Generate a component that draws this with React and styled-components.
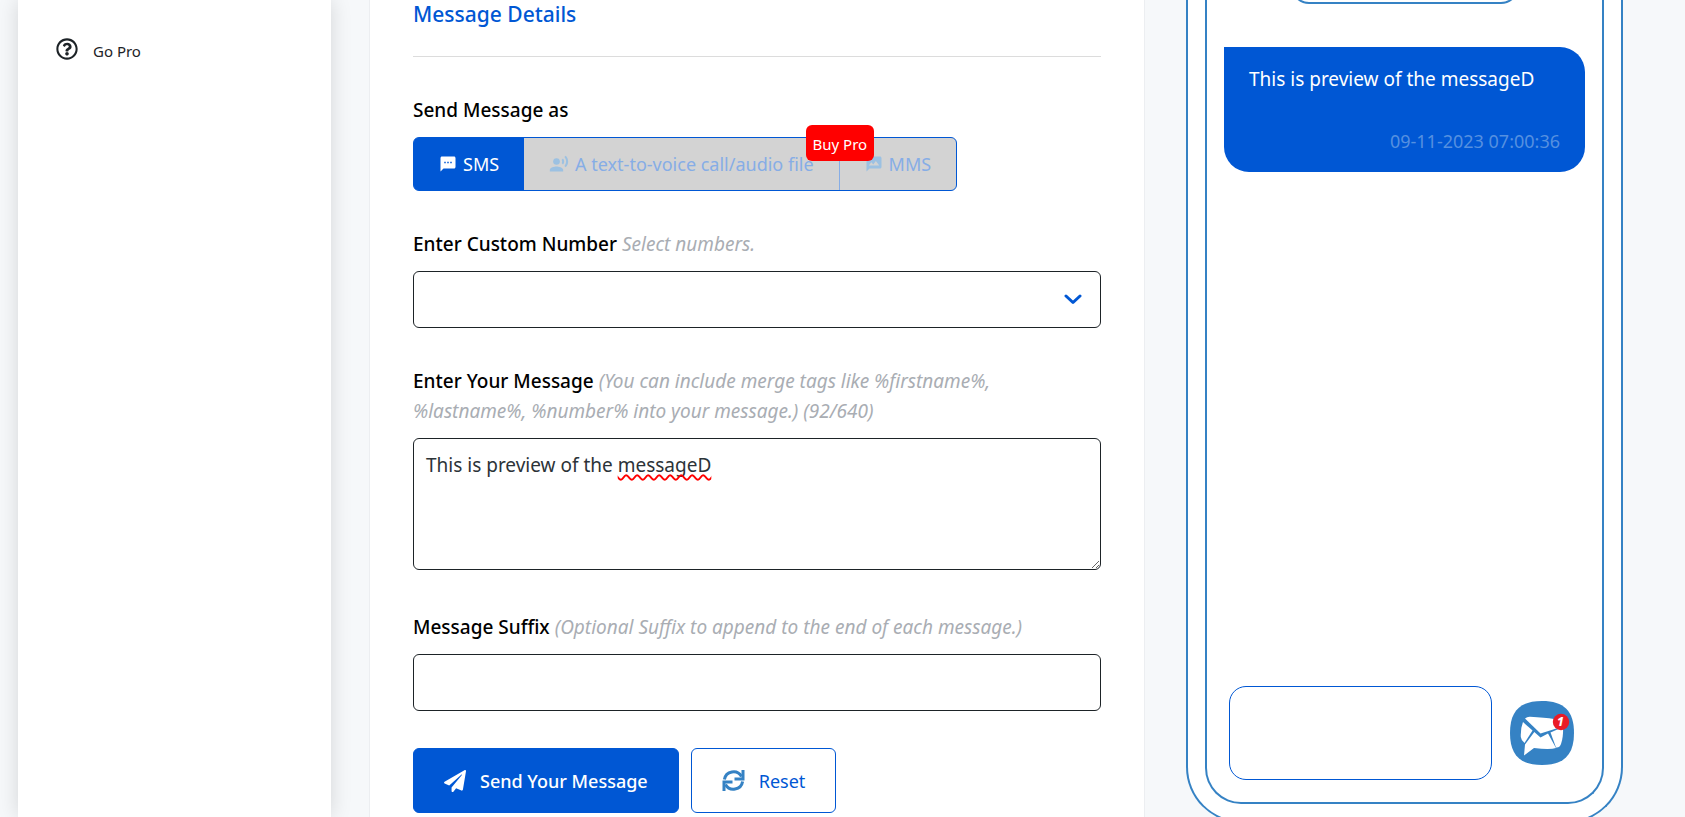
import React, { useState } from "react";
import styled, { createGlobalStyle, css } from "styled-components";
import { MdSms, MdRecordVoiceOver, MdMms } from "react-icons/md";
import { FaPaperPlane, FaRegQuestionCircle } from "react-icons/fa";

const blue = "#0057d4";
const steel = "#3582c4";
const ink = "#1d2327";

const GlobalStyle = createGlobalStyle`
  *, *::before, *::after { box-sizing: border-box; }
  body {
    margin: 0;
    background: #f6f8fa;
    color: ${ink};
    font-family: "Noto Sans", "Open Sans", sans-serif;
    font-size: 19px;
    line-height: 30px;
  }
  button, input, select, textarea { font: inherit; }
`;

const Page = styled.div`
  display: flex;
  height: 100vh;
  overflow: hidden;
  padding: 0 62px 0 18px;
`;

const Sidebar = styled.nav`
  flex: 0 0 313px;
  margin-right: 38px;
  padding: 32px 38px;
  background: #fff;
  box-shadow: 0 0 20px rgba(0, 0, 0, 0.14);
`;

const SidebarLink = styled.a`
  display: flex;
  align-items: center;
  gap: 15px;
  color: ${ink};
  font-size: 15px;
  text-decoration: none;

  span { padding-top: 4px; }
`;

const Card = styled.main`
  flex: 1;
  min-width: 0;
  margin-right: 41px;
  padding: 0 43px;
  background: #fff;
  border: solid #eceef1;
  border-width: 0 1px;
`;

const Title = styled.h2`
  margin: 0;
  padding-bottom: 28px;
  border-bottom: 1px solid #dcdcdc;
  color: ${blue};
  font-size: 21px;
  font-weight: 500;
  line-height: 28px;
`;

const Field = styled.div`
  margin-top: 38px;
`;

const Caption = styled.label`
  display: block;
  margin-bottom: 12px;
  color: #000;
  font-weight: 500;
`;

const Hint = styled.em`
  color: #a9adb3;
  font-weight: 400;
`;

const TypeGroup = styled.div`
  position: relative;
  display: inline-flex;
  height: 54px;
  border: 1px solid ${blue};
  border-radius: 6px;
  background: #d3d3d3;
  vertical-align: top;
`;

const TypeButton = styled.button`
  display: flex;
  align-items: center;
  gap: 6px;
  padding: 0 25px;
  border: 0 solid #86ade6;
  border-left-width: ${(p) => (p.$divided ? "1px" : "0")};
  border-radius: ${(p) => (p.$active ? "4px 0 0 4px" : "0")};
  background: ${(p) => (p.$active ? blue : "transparent")};
  color: ${(p) => (p.$active ? "#fff" : "#86ade6")};
  font-size: 18px;
  white-space: nowrap;

  svg { color: ${(p) => (p.$active ? "#fff" : "#9cc1e2")}; }
`;

const ProBadge = styled.a`
  position: absolute;
  top: -13px;
  right: 82px;
  padding: 4px 7px 2px;
  border-radius: 6px;
  background: #f00;
  color: #fff;
  font-size: 15px;
  text-decoration: none;
`;

const boxed = css`
  display: block;
  width: 100%;
  border: 1px solid ${ink};
  border-radius: 6px;
  background: #fff;
  color: #2c3338;
`;

const SelectWrap = styled.div`
  position: relative;

  svg {
    position: absolute;
    top: 20px;
    right: 19px;
    pointer-events: none;
  }
`;

const Select = styled.select`
  ${boxed}
  height: 57px;
  padding: 0 48px 0 12px;
  appearance: none;
`;

const Input = styled.input`
  ${boxed}
  height: 57px;
  padding: 0 12px;
`;

const MessageWrap = styled.div`
  position: relative;
  padding-bottom: 4px;
`;

const MessageBox = styled.textarea`
  ${boxed}
  height: 132px;
  padding: 11px 12px;
  resize: vertical;
`;

const SpellLayer = styled.div`
  position: absolute;
  inset: 0;
  padding: 12px 13px;
  color: transparent;
  pointer-events: none;

  span {
    text-decoration: underline wavy #f00 2px;
    text-decoration-skip-ink: none;
    text-underline-offset: 2px;
  }
`;

const Actions = styled.div`
  display: flex;
  gap: 12px;
  margin-top: 37px;
`;

const ActionButton = styled.button`
  display: flex;
  align-items: center;
  gap: 14px;
  height: 65px;
  padding: 0 30px;
  border: 1px solid ${blue};
  border-radius: 6px;
  background: ${(p) => (p.$primary ? blue : "#fff")};
  color: ${(p) => (p.$primary ? "#fff" : blue)};
  font-size: 18px;
  font-weight: ${(p) => (p.$primary ? 500 : 400)};
  white-space: nowrap;

  svg { color: ${(p) => (p.$primary ? "#fff" : steel)}; }
`;

const Phone = styled.aside`
  flex: 0 0 437px;
  min-width: 0;
  align-self: flex-start;
  padding: 0 17px 17px;
  border: 2px solid ${steel};
  border-top: 0;
  border-radius: 0 0 56px 56px;
  background: #fff;
`;

const Screen = styled.div`
  display: flex;
  flex-direction: column;
  height: 804px;
  padding: 0 17px 22px;
  border: 2px solid ${steel};
  border-top: 0;
  border-radius: 0 0 36px 36px;
`;

const Notch = styled.div`
  flex: none;
  align-self: center;
  width: 228px;
  height: 36px;
  margin-top: -32px;
  border: 2px solid ${steel};
  border-radius: 18px;
`;

const Bubble = styled.div`
  margin-top: 43px;
  padding: 17px 25px 16px;
  border-radius: 0 25px 25px 25px;
  background: ${blue};
  color: #fff;

  p { margin: 0 0 32px; }
  time {
    display: block;
    color: #5590e0;
    font-size: 18px;
    text-align: right;
  }
`;

const Composer = styled.div`
  display: flex;
  align-items: center;
  gap: 18px;
  margin-top: auto;
  padding: 0 11px 0 5px;
`;

const ComposerInput = styled.input`
  flex: 1;
  width: 100%;
  min-width: 0;
  height: 94px;
  padding: 0 16px;
  border: 1px solid ${blue};
  border-radius: 17px;
  background: #fff;
`;

const SendIcon = styled.button`
  padding: 0;
  border: 0;
  background: none;

  svg { display: block; }
`;

function RefreshIcon() {
  return (
    <svg
      width="23"
      height="21"
      viewBox="0 0 23 21"
      fill="none"
      stroke="currentColor"
      strokeWidth="3"
      aria-hidden="true"
    >
      <path d="M2.400 9.500A9.200 9.200 0 0 1 19.500 6.500" />
      <path d="M21 0V9H12.500" />
      <path d="M20.600 11.500A9.200 9.200 0 0 1 3.500 14.500" />
      <path d="M2 21V12H10.500" />
    </svg>
  );
}

function MailLogo() {
  return (
    <svg width="64" height="64" viewBox="0 0 64 64" aria-hidden="true">
      <path
        d="M32 0C54 0 64 10 64 32S54 64 32 64 0 54 0 32 10 0 32 0Z"
        fill={steel}
      />
      <path
        d="M15 17.500Q17 15.700 20 15.800Q35 16.600 44 18L51 26Q40 29.500 30.500 32.500Z"
        fill="#fff"
      />
      <path
        d="M13 21L22.500 29.500L14.500 42Q11 39 10.800 36Q10.500 27 13 21Z"
        fill="#fff"
      />
      <path
        d="M24.300 31L30.500 36.500L38 32.500L46 47Q40 49 24 47L14 54.500L15 43.500Z"
        fill="#fff"
      />
      <path
        d="M40.500 31.500L53 26Q53.500 36 51 43Q49.500 47 46 46.500Z"
        fill="#fff"
      />
      <circle cx="51" cy="21" r="8.200" fill="#ea1b26" />
      <text
        x="50.500"
        y="25"
        fill="#fff"
        fontFamily="Noto Sans, sans-serif"
        fontSize="12"
        fontStyle="italic"
        fontWeight="800"
        textAnchor="middle"
      >
        1
      </text>
    </svg>
  );
}

export default function App() {
  const [message, setMessage] = useState("This is preview of the messageD");
  const split = message.lastIndexOf(" ") + 1;

  return (
    <>
      <GlobalStyle />
      <Page>
        <Sidebar>
          <SidebarLink href="#pro">
            <FaRegQuestionCircle size={22} />
            <span>Go Pro</span>
          </SidebarLink>
        </Sidebar>

        <Card>
          <Title>Message Details</Title>

          <Field>
            <Caption as="div" id="type-label">Send Message as</Caption>
            <TypeGroup role="group" aria-labelledby="type-label">
              <TypeButton type="button" $active>
                <MdSms size={18} /> SMS
              </TypeButton>
              <TypeButton type="button" disabled>
                <MdRecordVoiceOver size={20} /> A text-to-voice call/audio file
              </TypeButton>
              <TypeButton type="button" disabled $divided>
                <MdMms size={18} /> MMS
              </TypeButton>
              <ProBadge href="#buy">Buy Pro</ProBadge>
            </TypeGroup>
          </Field>

          <Field>
            <Caption htmlFor="number">
              Enter Custom Number <Hint>Select numbers.</Hint>
            </Caption>
            <SelectWrap>
              <Select id="number" defaultValue="">
                <option value="" />
              </Select>
              <svg width="18" height="18" viewBox="0 0 18 18" aria-hidden="true">
                <path
                  d="M2 5L9 11.500L16 5"
                  fill="none"
                  stroke={blue}
                  strokeWidth="3"
                  strokeLinecap="round"
                  strokeLinejoin="round"
                />
              </svg>
            </SelectWrap>
          </Field>

          <Field>
            <Caption htmlFor="message">
              Enter Your Message{" "}
              <Hint>
                (You can include merge tags like %firstname%, %lastname%,
                %number% into your message.) (92/640)
              </Hint>
            </Caption>
            <MessageWrap>
              <MessageBox
                id="message"
                spellCheck={false}
                value={message}
                onChange={(e) => setMessage(e.target.value)}
              />
              <SpellLayer aria-hidden="true">
                {message.slice(0, split)}
                <span>{message.slice(split)}</span>
              </SpellLayer>
            </MessageWrap>
          </Field>

          <Field>
            <Caption htmlFor="suffix">
              Message Suffix{" "}
              <Hint>(Optional Suffix to append to the end of each message.)</Hint>
            </Caption>
            <Input id="suffix" type="text" />
          </Field>

          <Actions>
            <ActionButton type="submit" $primary>
              <FaPaperPlane size={22} /> Send Your Message
            </ActionButton>
            <ActionButton type="reset">
              <RefreshIcon /> Reset
            </ActionButton>
          </Actions>
        </Card>

        <Phone>
          <Screen>
            <Notch />
            <Bubble>
              <p>{message}</p>
              <time>09-11-2023 07:00:36</time>
            </Bubble>
            <Composer>
              <ComposerInput type="text" aria-label="Reply" />
              <SendIcon type="button" aria-label="Messages">
                <MailLogo />
              </SendIcon>
            </Composer>
          </Screen>
        </Phone>
      </Page>
    </>
  );
}
